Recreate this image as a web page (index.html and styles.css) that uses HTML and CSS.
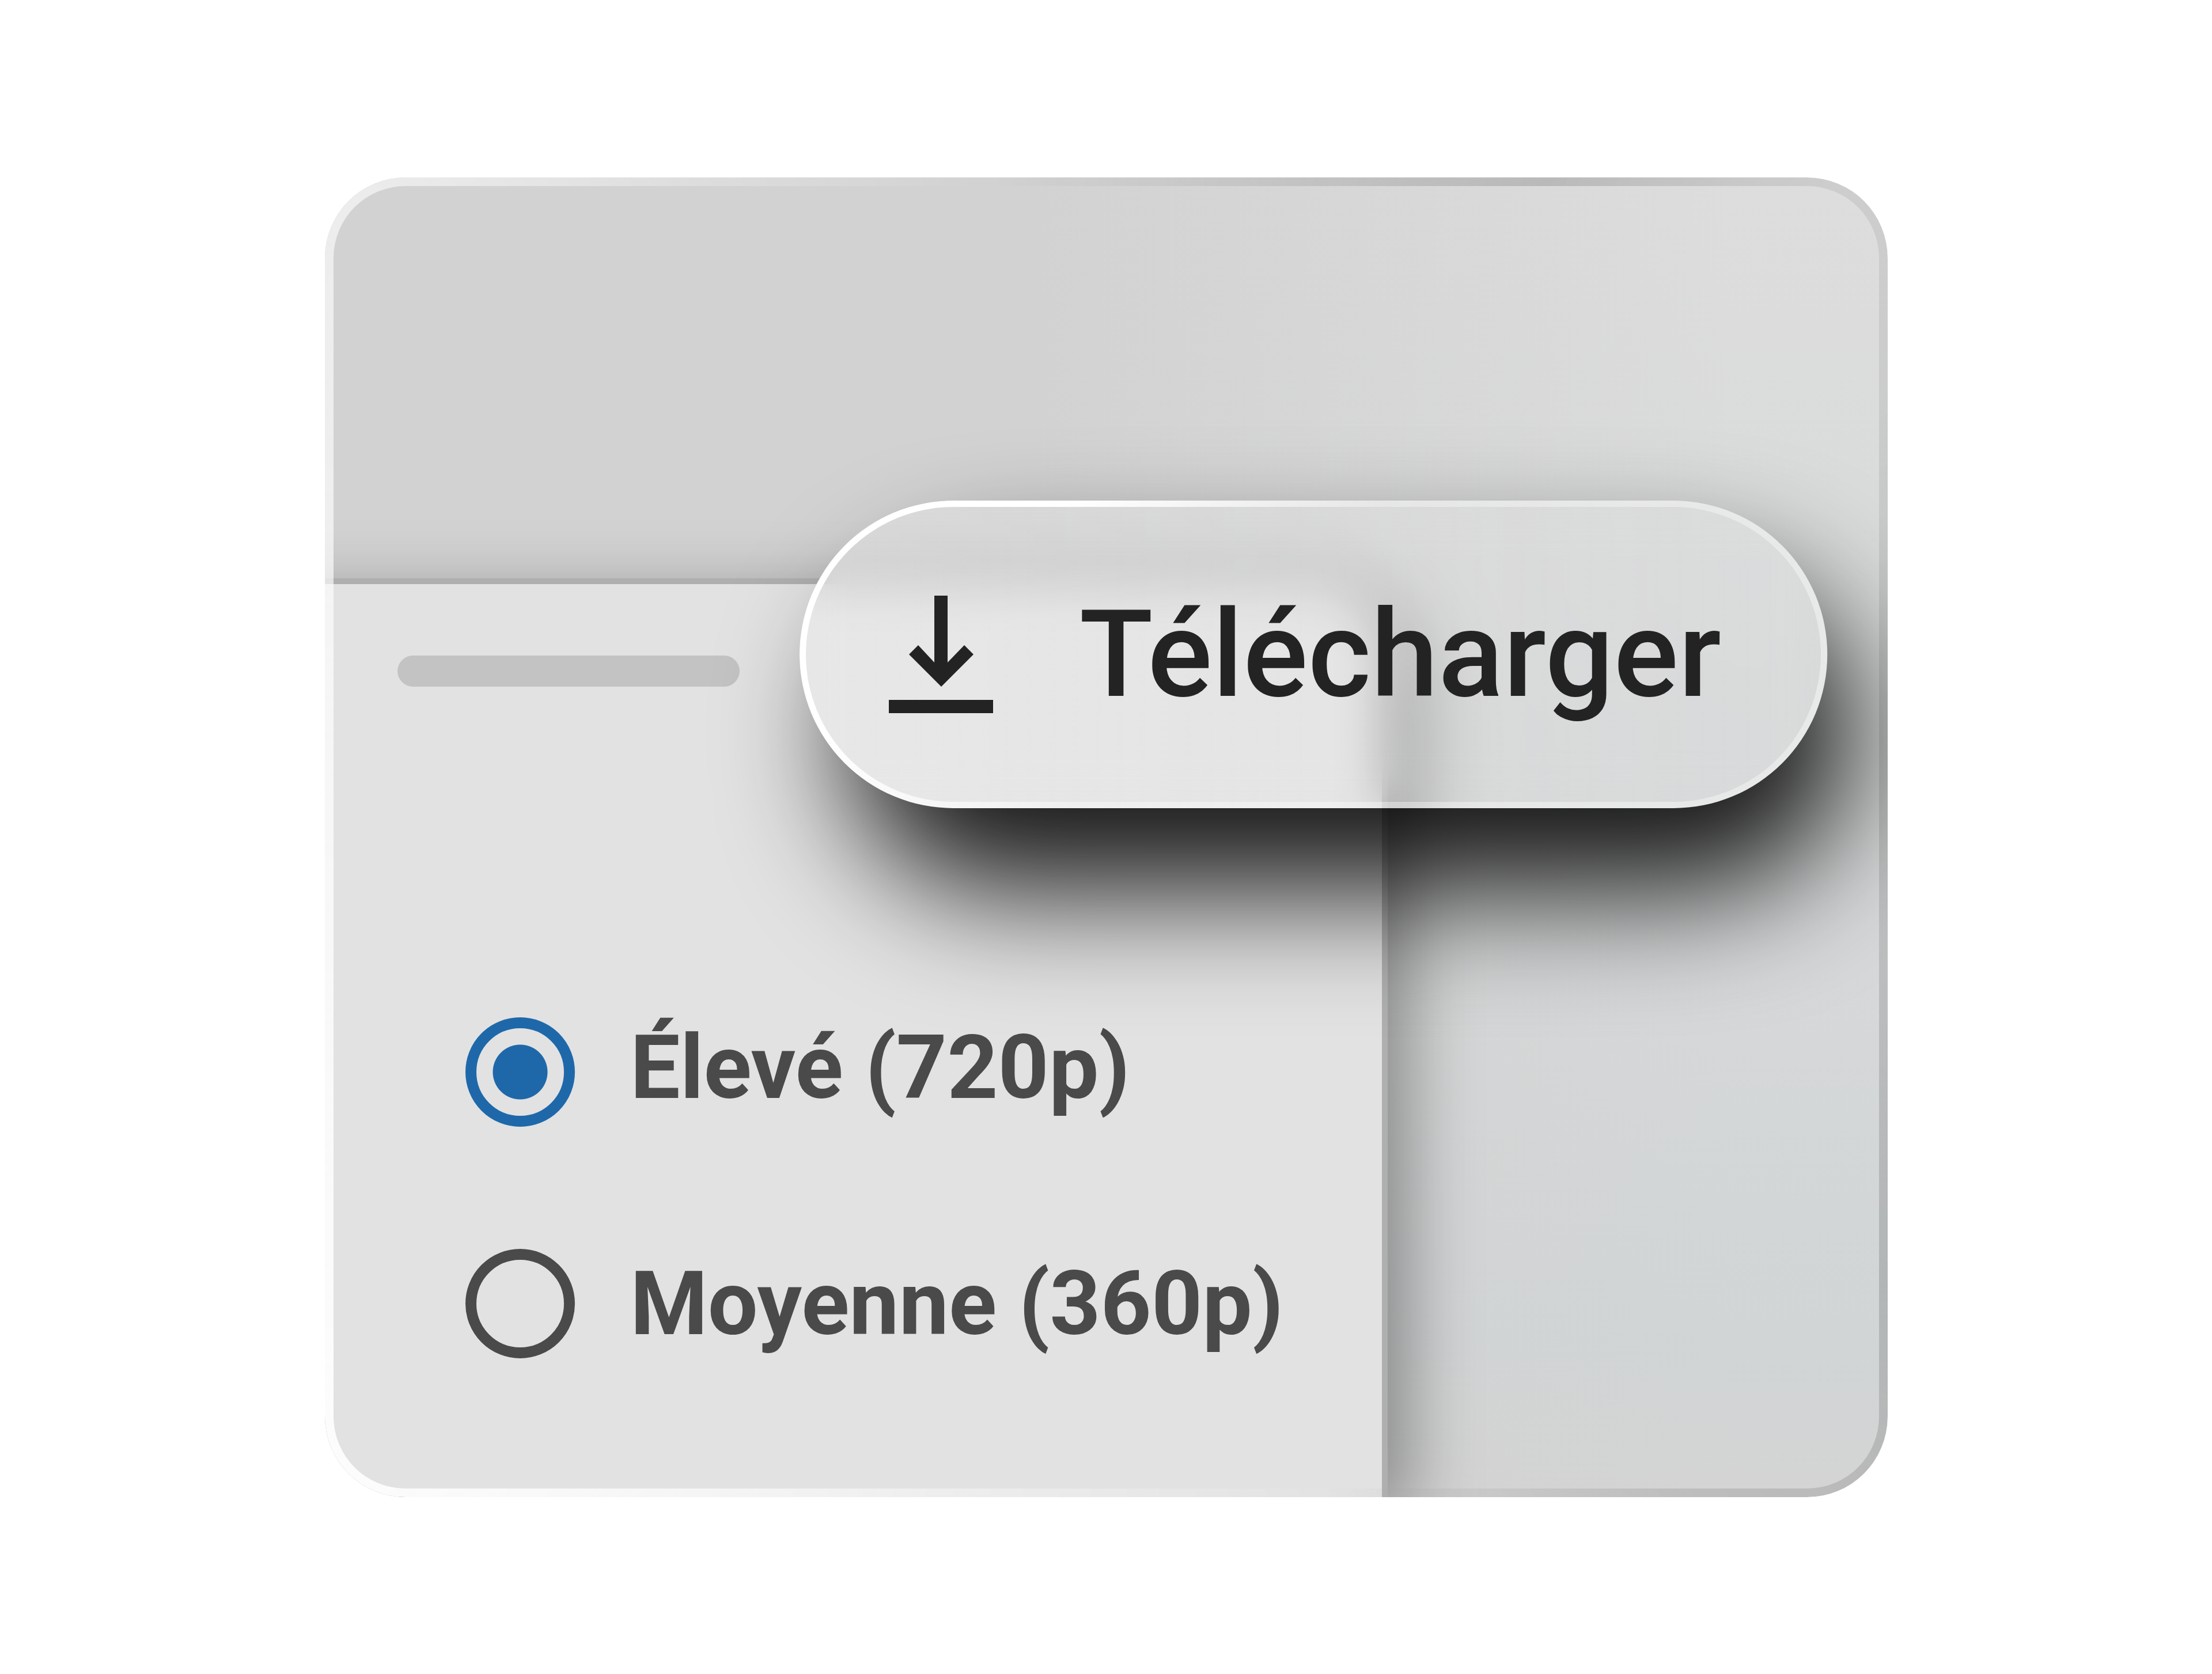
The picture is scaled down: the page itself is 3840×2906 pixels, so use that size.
FILE: index.html
```html
<!DOCTYPE html>
<html lang="fr">
<head>
    <meta charset="UTF-8">
    <meta name="viewport" content="width=device-width, initial-scale=1.0">
    <title>Télécharger</title>
    <link rel="stylesheet" href="styles.css">
</head>
<body>

    <main class="card">
        <form class="panel">
            <div class="panel-title"></div>

            <div class="options">
                <div class="option-inputs">
                    <input type="radio" id="quality-high" name="quality" value="720" checked>
                    <input type="radio" id="quality-medium" name="quality" value="360">
                </div>
                <div class="option-labels">
                    <label for="quality-high">Élevé (720p)</label>
                    <label for="quality-medium">Moyenne (360p)</label>
                </div>
            </div>
        </form>

        <div class="download">
            <button type="button" class="download-button">
                <svg class="download-icon" viewBox="0 0 181 204" aria-hidden="true">
                    <path d="M79 0h23v116l29-30 16 16-56 56-56-56 16-16 28 30z"/>
                    <path d="M0 181h181v23H0z"/>
                </svg>
                <span>Télécharger</span>
            </button>

            <!-- soft shadow, cut out where the glass button is -->
            <svg class="download-shadow" viewBox="0 0 1785 534" aria-hidden="true">
                <defs>
                    <filter id="soft" x="-30%" y="-90%" width="160%" height="280%">
                        <feGaussianBlur stdDeviation="108"/>
                    </filter>
                    <clipPath id="outside">
                        <path clip-rule="evenodd" d="M-600-600h3000v2000H-600zM267 0A267 267 0 0 0 267 534H1518A267 267 0 0 0 1518 0z"/>
                    </clipPath>
                </defs>
                <g clip-path="url(#outside)">
                    <rect x="85" y="129" width="1740" height="547" rx="270" fill="#000" fill-opacity="0.9" filter="url(#soft)"/>
                </g>
            </svg>
        </div>
    </main>

</body>
</html>
```
FILE: styles.css
```css
* {
    box-sizing: border-box;
}

body {
    font-family: Roboto, "Liberation Sans", sans-serif;
    background-color: #fff;
    margin: 0;
    padding: 0 563px 0 564px;
    min-height: 100vh;
    display: flex;
    align-items: center;
}

.card {
    position: relative;
    flex: 1;
    padding-top: 696px;
    border-radius: 140px;
    overflow: hidden;
    background:
        linear-gradient(to right, #d2d2d2 45%, rgba(210, 210, 210, 0) 90%),
        linear-gradient(to bottom, #dddddd 0%, #dadbdb 25%, #d6d8d9 60%, #d1d5d6 88%, #d4d4d4 100%);
}

/* translucent edge, drawn over the content */
.card::after,
.download-button::after {
    content: "";
    position: absolute;
    inset: 0;
    padding: 15px;
    border-radius: inherit;
    pointer-events: none;
    background: conic-gradient(
        rgba(0, 0, 0, 0.03) 0deg,
        rgba(0, 0, 0, 0.15) 34deg,
        rgba(0, 0, 0, 0.07) 48deg,
        rgba(0, 0, 0, 0.07) 60deg,
        rgba(0, 0, 0, 0.15) 120deg,
        rgba(0, 0, 0, 0.1) 139deg,
        rgba(255, 255, 255, 0.05) 162deg,
        rgba(255, 255, 255, 0.4) 193deg,
        rgba(255, 255, 255, 0.9) 230deg,
        rgba(255, 255, 255, 0.65) 288deg,
        rgba(255, 255, 255, 0.6) 310deg,
        rgba(255, 255, 255, 0.25) 328deg,
        rgba(255, 255, 255, 0) 350deg,
        rgba(0, 0, 0, 0.03) 360deg
    );
    mask: linear-gradient(#000 0 0) content-box exclude, linear-gradient(#000 0 0);
}

/* runs past the left edge so its shadow does not fade out there */
.panel {
    width: calc(68% + 150px);
    margin-left: -150px;
    padding: 124px 126px 241px 276px;
    background-color: #e2e2e2;
    border: 10px solid #afafaf;
    border-left: none;
    border-bottom: none;
    border-top-right-radius: 140px;
    box-shadow: 36px 36px 122px rgba(0, 0, 0, 0.36);
}

.panel-title {
    width: 594px;
    height: 54px;
    border-radius: 27px;
    background-color: #c3c3c3;
}

.options {
    display: flex;
    gap: 96px;
    padding: 574px 0 0 118px;
}

.option-inputs,
.option-labels {
    display: flex;
    flex-direction: column;
}

.option-inputs {
    gap: 212px;
}

.option-labels {
    gap: 234px;
}

.option-inputs input {
    appearance: none;
    width: 190px;
    height: 190px;
    margin: 0;
    border: 19px solid #4a4a4a;
    border-radius: 50%;
}

.option-inputs input:checked {
    border-color: #1e68aa;
    background: radial-gradient(circle, #1e68aa 47px, transparent 48px);
}

.option-labels label {
    font-size: 154px;
    font-weight: 700;
    line-height: 176px;
    color: #4a4a4a;
    white-space: nowrap;
}

.download {
    position: absolute;
    top: 561px;
    right: 105px;
}

.download-button {
    position: relative;
    height: 534px;
    display: flex;
    align-items: center;
    gap: 150px;
    padding: 0 184px 0 155px;
    border: none;
    border-radius: 267px;
    background: linear-gradient(to right, rgba(255, 255, 255, 0.2), rgba(255, 255, 255, 0.02));
    backdrop-filter: blur(40px);
    font-family: inherit;
    font-size: 210px;
    font-weight: 500;
    color: #232323;
    cursor: pointer;
}

.download-button::after {
    padding: 11px;
    background: linear-gradient(135deg, #fff 0%, #fff 20%, rgba(255, 255, 255, 0.35) 44%, rgba(255, 255, 255, 0.4) 100%);
}

.download-icon {
    width: 181px;
    height: 204px;
    fill: #232323;
}

.download-shadow {
    position: absolute;
    inset: 0;
    width: 100%;
    height: 100%;
    overflow: visible;
    pointer-events: none;
}
```
